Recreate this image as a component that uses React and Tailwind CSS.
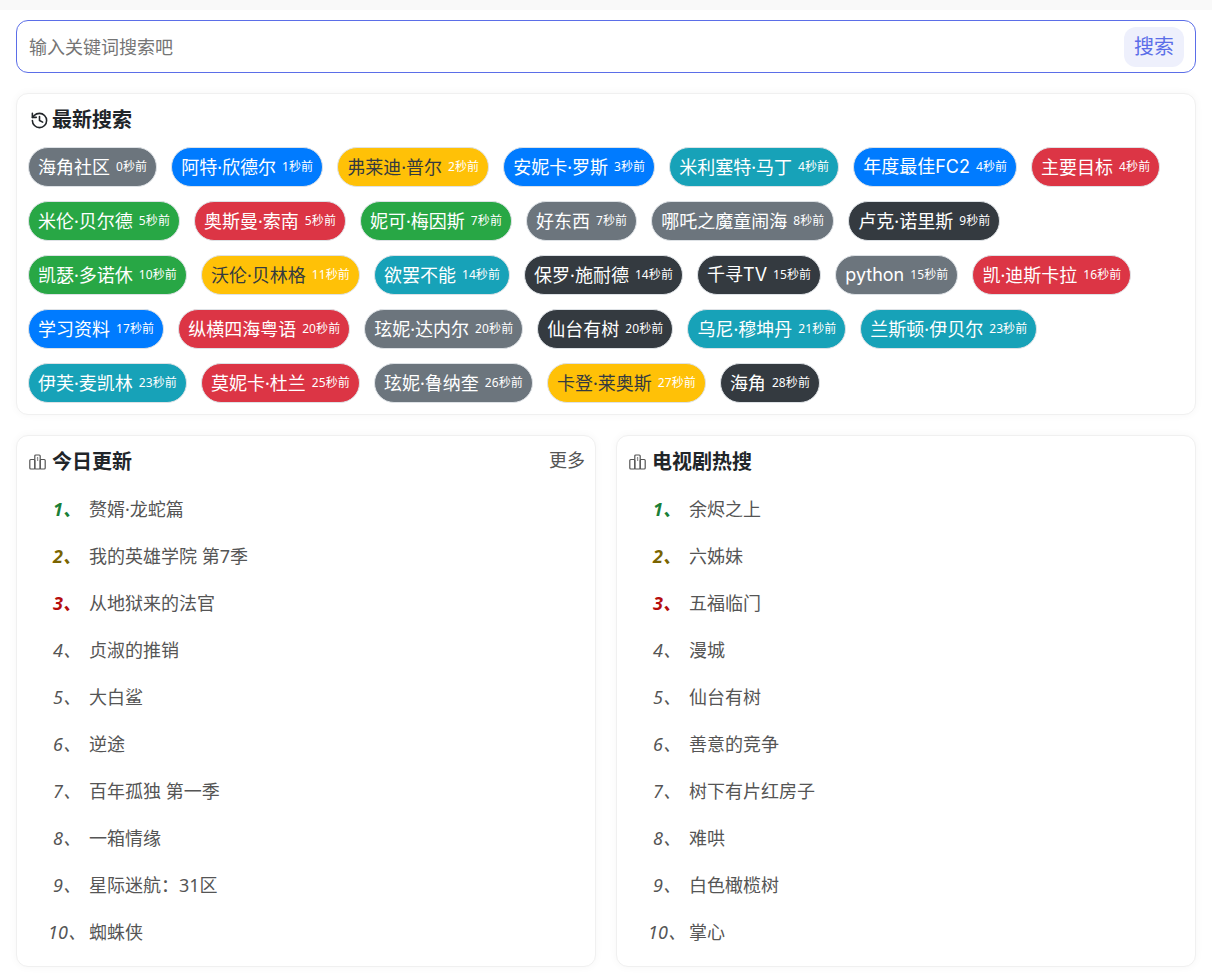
import { History } from 'lucide-react'

const FONT = "font-['Noto_Sans','Noto_Sans_CJK_SC',sans-serif]"
const LATIN_FONT = "font-['Inter','Noto_Sans_CJK_SC',sans-serif]"

const pillColors = {
  gray: 'bg-[#6c757d] text-white',
  blue: 'bg-[#007bff] text-white',
  yellow: 'bg-[#ffc107] text-[#343a40]',
  teal: 'bg-[#17a2b8] text-white',
  red: 'bg-[#dc3545] text-white',
  green: 'bg-[#28a745] text-white',
  dark: 'bg-[#343a40] text-white',
}

const rows = [
  [['海角社区', '0秒前', 'gray'], ['阿特·欣德尔', '1秒前', 'blue'], ['弗莱迪·普尔', '2秒前', 'yellow'], ['安妮卡·罗斯', '3秒前', 'blue'], ['米利塞特·马丁', '4秒前', 'teal'], ['年度最佳FC2', '4秒前', 'blue'], ['主要目标', '4秒前', 'red']],
  [['米伦·贝尔德', '5秒前', 'green'], ['奥斯曼·索南', '5秒前', 'red'], ['妮可·梅因斯', '7秒前', 'green'], ['好东西', '7秒前', 'gray'], ['哪吒之魔童闹海', '8秒前', 'gray'], ['卢克·诺里斯', '9秒前', 'dark']],
  [['凯瑟·多诺休', '10秒前', 'green'], ['沃伦·贝林格', '11秒前', 'yellow'], ['欲罢不能', '14秒前', 'teal'], ['保罗·施耐德', '14秒前', 'dark'], ['千寻TV', '15秒前', 'dark'], ['python', '15秒前', 'gray'], ['凯·迪斯卡拉', '16秒前', 'red']],
  [['学习资料', '17秒前', 'blue'], ['纵横四海粤语', '20秒前', 'red'], ['玹妮·达内尔', '20秒前', 'gray'], ['仙台有树', '20秒前', 'dark'], ['乌尼·穆坤丹', '21秒前', 'teal'], ['兰斯顿·伊贝尔', '23秒前', 'teal']],
  [['伊芙·麦凯林', '23秒前', 'teal'], ['莫妮卡·杜兰', '25秒前', 'red'], ['玹妮·鲁纳奎', '26秒前', 'gray'], ['卡登·莱奥斯', '27秒前', 'yellow'], ['海角', '28秒前', 'dark']],
]

const todayList = ['赘婿·龙蛇篇', '我的英雄学院 第7季', '从地狱来的法官', '贞淑的推销', '大白鲨', '逆途', '百年孤独 第一季', '一箱情缘', '星际迷航：31区', '蜘蛛侠']
const tvList = ['余烬之上', '六姊妹', '五福临门', '漫城', '仙台有树', '善意的竞争', '树下有片红房子', '难哄', '白色橄榄树', '掌心']

const rankColors = ['font-bold text-[#1a7f37]', 'font-bold text-[#7a6400]', 'font-bold text-[#b50d0d]']

function Podium() {
  return (
    <svg width="17" height="16" viewBox="0 0 17 16" fill="none" stroke="#555" strokeWidth="1.2" className="shrink-0">
      <rect x="0.8" y="5.5" width="5" height="9.5" rx="1" />
      <rect x="5.8" y="1" width="5.4" height="14" rx="1" />
      <rect x="11.2" y="5.5" width="5" height="9.5" rx="1" />
      <path d="M7.9 4 8.7 3.4V7" strokeWidth="0.8" />
    </svg>
  )
}

function Pill({ name, time, color }) {
  // 名字里带拉丁字母的用 Inter，宽度更接近
  const latin = /[A-Za-z]/.test(name)
  return (
    <span className={`flex h-10 items-center gap-1.5 rounded-full border border-[#dee2e6] px-[9px] ${pillColors[color]}`}>
      <span className={`text-lg leading-none ${latin ? LATIN_FONT : ''}`}>{name}</span>
      <span className="text-xs leading-none tracking-[0.1px] text-white">{time}</span>
    </span>
  )
}

function RankCard({ title, items, more }) {
  return (
    <div className="flex-1 rounded-xl border border-[#f0f0f0] bg-white pb-[11px] shadow-[0_0_8px_rgba(0,0,0,0.04)]">
      <div className="flex h-[49px] items-center justify-between pl-3 pr-[10px] pt-[3px]">
        <div className="flex items-center gap-[6px]">
          <Podium />
          <span className="text-xl font-bold text-[#212529]">{title}</span>
        </div>
        {more && <span className="-mt-[4px] text-lg text-[#555]">更多</span>}
      </div>
      <ul>
        {items.map((item, i) => (
          <li key={item} className="flex h-[47px] items-center text-lg text-[#555]">
            <span className={`ml-[28px] w-[44px] text-center italic ${rankColors[i] || ''}`}>{i + 1}、</span>
            <span>{item}</span>
          </li>
        ))}
      </ul>
    </div>
  )
}

export default function App() {
  return (
    <div className={`min-h-[980px] bg-white ${FONT}`}>
      <div className="h-[10px] bg-[#f9f9f9]" />
      <div className="px-4 pt-[10px]">
        {/* Search */}
        <div className="flex h-[53px] items-center justify-between rounded-xl border border-[#5b6ee8] pl-3 pr-[11px]">
          <span className="text-lg text-[#757575]">输入关键词搜索吧</span>
          <button className="h-10 w-[60px] rounded-xl bg-[#eef0fc] text-xl text-[#5b6ee8]">搜索</button>
        </div>

        {/* 最新搜索 */}
        <div className="mt-[20px] h-[322px] rounded-xl border border-[#f0f0f0] bg-white pl-[11px] pt-[12px] shadow-[0_0_8px_rgba(0,0,0,0.04)]">
          <div className="flex h-[28px] items-center gap-[3px] pl-[2px]">
            <History size={19} strokeWidth={2} className="text-[#212529]" />
            <span className="text-xl font-bold text-[#212529]">最新搜索</span>
          </div>
          <div className="mt-[13px] flex flex-col gap-[14px]">
            {rows.map((row, i) => (
              <div key={i} className="flex gap-[14px]">
                {row.map(([name, time, color]) => (
                  <Pill key={name} name={name} time={time} color={color} />
                ))}
              </div>
            ))}
          </div>
        </div>

        {/* 榜单 */}
        <div className="mt-[20px] flex gap-5">
          <RankCard title="今日更新" items={todayList} more />
          <RankCard title="电视剧热搜" items={tvList} />
        </div>
      </div>
    </div>
  )
}
